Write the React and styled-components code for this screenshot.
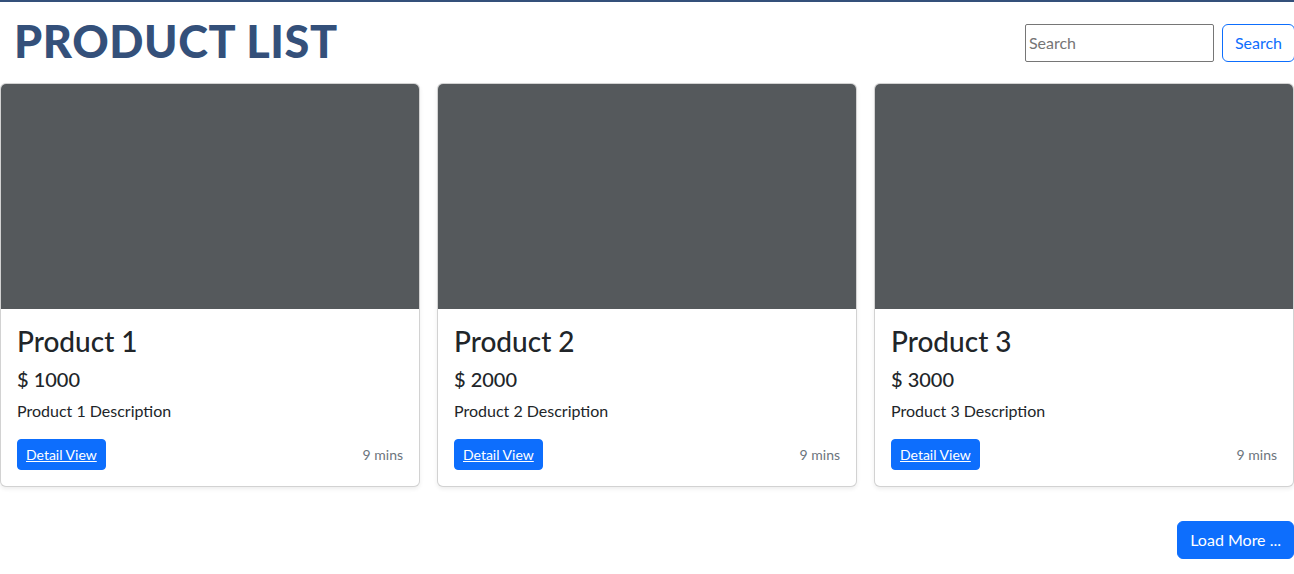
import React from 'react';
import styled, { createGlobalStyle } from 'styled-components';

const GlobalStyle = createGlobalStyle`
	html, body {
		margin: 0;
		padding: 0;
		background: #fff;
		overflow: hidden;
	}
	body {
		font-family: Lato, "Noto Sans", sans-serif;
		color: #212529;
		font-size: 16px;
		line-height: 1.5;
	}
`

const Page = styled.div`
	width: 1294px;
	border-top: 2px solid #34507a;
	overflow: hidden;
`

const Header = styled.header`
	display: flex;
	align-items: center;
	justify-content: space-between;
	height: 81px;
`

const Title = styled.h1`
	margin: 0 0 0 14px;
	font-family: Lato, sans-serif;
	font-weight: 900;
	font-size: 45px;
	letter-spacing: 0.6px;
	line-height: 1;
	color: #34507a;
	padding-bottom: 2px;
`

const SearchForm = styled.form`
	display: flex;
	align-items: center;
	gap: 8px;
	margin-right: -1px;
`

const SearchInput = styled.input`
	box-sizing: border-box;
	width: 189px;
	height: 38px;
	padding: 1px 3px;
	font-family: inherit;
	font-size: 16px;
	border: 1px solid #767676;
	border-radius: 2px;
	&::placeholder {
		color: #757575;
	}
`

const Button = styled.button`
	box-sizing: border-box;
	font-family: inherit;
	font-size: ${p => (p.$small ? '14px' : '16px')};
	line-height: 1.5;
	padding: ${p => (p.$small ? '4px 8px' : '6px 12px')};
	border-radius: ${p => (p.$small ? '4px' : '6px')};
	border: 1px solid #0d6efd;
	background: ${p => (p.$outline ? 'transparent' : '#0d6efd')};
	color: ${p => (p.$outline ? '#0d6efd' : '#fff')};
	text-decoration: ${p => (p.$link ? 'underline' : 'none')};
	cursor: pointer;
`

const Grid = styled.div`
	display: grid;
	grid-template-columns: repeat(3, 420px);
	gap: 17px;
`

const Card = styled.div`
	border: 1px solid rgba(0, 0, 0, 0.175);
	border-radius: 6px;
	box-shadow: 0 2px 4px rgba(0, 0, 0, 0.075);
	overflow: hidden;
	background: #fff;
`

const Thumb = styled.div`
	height: 225px;
	background: #55595c;
`

const CardBody = styled.div`
	padding: 16px;
`

const CardTitle = styled.h3`
	margin: 0 0 8px;
	font-size: 28px;
	font-weight: 500;
	line-height: 1.2;
`

const Price = styled.h5`
	margin: 0 0 8px;
	font-size: 20px;
	font-weight: 500;
	line-height: 1.2;
`

const Description = styled.p`
	margin: 0 0 16px;
`

const CardFooter = styled.div`
	display: flex;
	align-items: center;
	justify-content: space-between;
`

const Muted = styled.small`
	font-size: 14px;
	color: #6c757d;
`

const Actions = styled.div`
	display: flex;
	justify-content: flex-end;
	padding-top: 34px;
`

const products = [
	{ id: 1, price: 1000 },
	{ id: 2, price: 2000 },
	{ id: 3, price: 3000 },
];

export default function App() {
	return (
		<Page>
			<GlobalStyle />
			<Header>
				<Title>PRODUCT LIST</Title>
				<SearchForm onSubmit={e => e.preventDefault()}>
					<SearchInput placeholder="Search" />
					<Button $outline type="submit">Search</Button>
				</SearchForm>
			</Header>
			<Grid>
				{products.map(p => (
					<Card key={p.id}>
						<Thumb />
						<CardBody>
							<CardTitle>Product {p.id}</CardTitle>
							<Price>$ {p.price}</Price>
							<Description>Product {p.id} Description</Description>
							<CardFooter>
								<Button $small $link>Detail View</Button>
								<Muted>9 mins</Muted>
							</CardFooter>
						</CardBody>
					</Card>
				))}
			</Grid>
			<Actions>
				<Button>Load More ...</Button>
			</Actions>
		</Page>
	);
}
